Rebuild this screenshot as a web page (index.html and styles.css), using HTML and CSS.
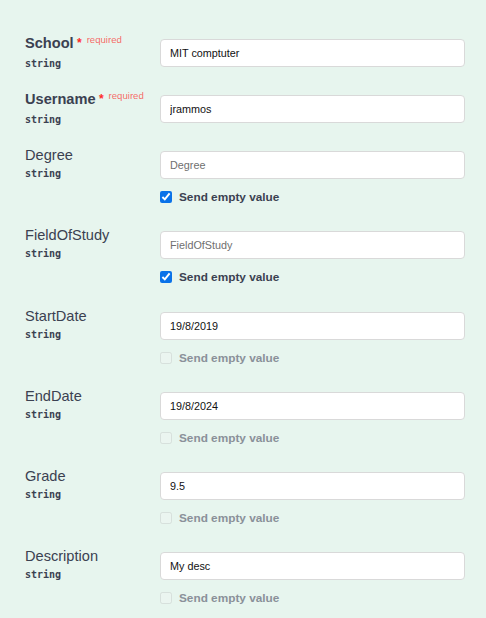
FILE: index.html
```html
<!DOCTYPE html>
<html>
<head>
<meta charset="utf-8">
<link rel="stylesheet" href="styles.css">
</head>
<body>
<div class="params">
  <div class="row">
    <div class="label-col">
      <div class="name required">School<span class="star">&nbsp;*</span><span class="req">required</span></div>
      <div class="type">string</div>
    </div>
    <div class="field-col">
      <input class="field" type="text" value="MIT comptuter">
    </div>
  </div>
  <div class="row">
    <div class="label-col">
      <div class="name required">Username<span class="star">&nbsp;*</span><span class="req">required</span></div>
      <div class="type">string</div>
    </div>
    <div class="field-col">
      <input class="field" type="text" value="jrammos">
    </div>
  </div>
  <div class="row">
    <div class="label-col">
      <div class="name">Degree</div>
      <div class="type">string</div>
    </div>
    <div class="field-col">
      <input class="field" type="text" placeholder="Degree">
      <label class="empty"><input type="checkbox" checked><span>Send empty value</span></label>
    </div>
  </div>
  <div class="row">
    <div class="label-col">
      <div class="name">FieldOfStudy</div>
      <div class="type">string</div>
    </div>
    <div class="field-col">
      <input class="field" type="text" placeholder="FieldOfStudy">
      <label class="empty"><input type="checkbox" checked><span>Send empty value</span></label>
    </div>
  </div>
  <div class="row">
    <div class="label-col">
      <div class="name">StartDate</div>
      <div class="type">string</div>
    </div>
    <div class="field-col">
      <input class="field" type="text" value="19/8/2019">
      <label class="empty disabled"><input type="checkbox" disabled><span>Send empty value</span></label>
    </div>
  </div>
  <div class="row">
    <div class="label-col">
      <div class="name">EndDate</div>
      <div class="type">string</div>
    </div>
    <div class="field-col">
      <input class="field" type="text" value="19/8/2024">
      <label class="empty disabled"><input type="checkbox" disabled><span>Send empty value</span></label>
    </div>
  </div>
  <div class="row">
    <div class="label-col">
      <div class="name">Grade</div>
      <div class="type">string</div>
    </div>
    <div class="field-col">
      <input class="field" type="text" value="9.5">
      <label class="empty disabled"><input type="checkbox" disabled><span>Send empty value</span></label>
    </div>
  </div>
  <div class="row">
    <div class="label-col">
      <div class="name">Description</div>
      <div class="type">string</div>
    </div>
    <div class="field-col">
      <input class="field" type="text" value="My desc">
      <label class="empty disabled"><input type="checkbox" disabled><span>Send empty value</span></label>
    </div>
  </div>
</div>
</body>
</html>
```
FILE: styles.css
```css
html, body {
  margin: 0;
  padding: 0;
  background: #e7f5ee;
  font-family: "Liberation Sans", Arial, sans-serif;
  color: #3b4151;
}

.params {
  padding: 35px 21px 0 25px;
  display: flex;
  flex-direction: column;
}

.row {
  display: flex;
  padding-bottom: 20px;
}

.row:nth-child(5) {
  padding-top: 1px;
}

.label-col {
  width: 135px;
  min-height: 36px;
  flex-shrink: 0;
}

.name {
  font-size: 14.6px;
  line-height: 16px;
  white-space: nowrap;
}

.name.required {
  font-weight: bold;
}

.star {
  color: #ff2a2a;
  font-size: 12px;
  position: relative;
  top: -1px;
}

.req {
  position: relative;
  top: -5px;
  padding-left: 5px;
  font-size: 9.6px;
  font-weight: normal;
  color: rgba(255, 0, 0, 0.6);
}

.type {
  margin-top: 4px;
  font-family: "DejaVu Sans Mono", "Liberation Mono", monospace;
  font-size: 10px;
  font-weight: bold;
  line-height: 14px;
  color: #3b4151;
}

.field-col {
  flex: 1;
  display: flex;
  flex-direction: column;
  padding-top: 4px;
}

.field {
  box-sizing: border-box;
  width: 305px;
  height: 28px;
  margin: 0;
  padding: 0 9px;
  border: 1px solid #d9d9d9;
  border-radius: 4px;
  background: #fff;
  font-family: "Liberation Sans", Arial, sans-serif;
  font-size: 10.8px;
  color: #111;
  outline: none;
}

.field::placeholder {
  color: #6f6f6f;
}

.empty {
  display: flex;
  align-items: center;
  height: 20px;
  margin-top: 8px;
  font-size: 11.8px;
  font-weight: bold;
  color: #3b4151;
}

.empty input {
  width: 12px;
  height: 12px;
  margin: 0 7px 0 0;
  accent-color: #0a72e8;
}

.empty.disabled {
  color: #8a9099;
}

.empty.disabled input {
  opacity: 0.5;
}
```
